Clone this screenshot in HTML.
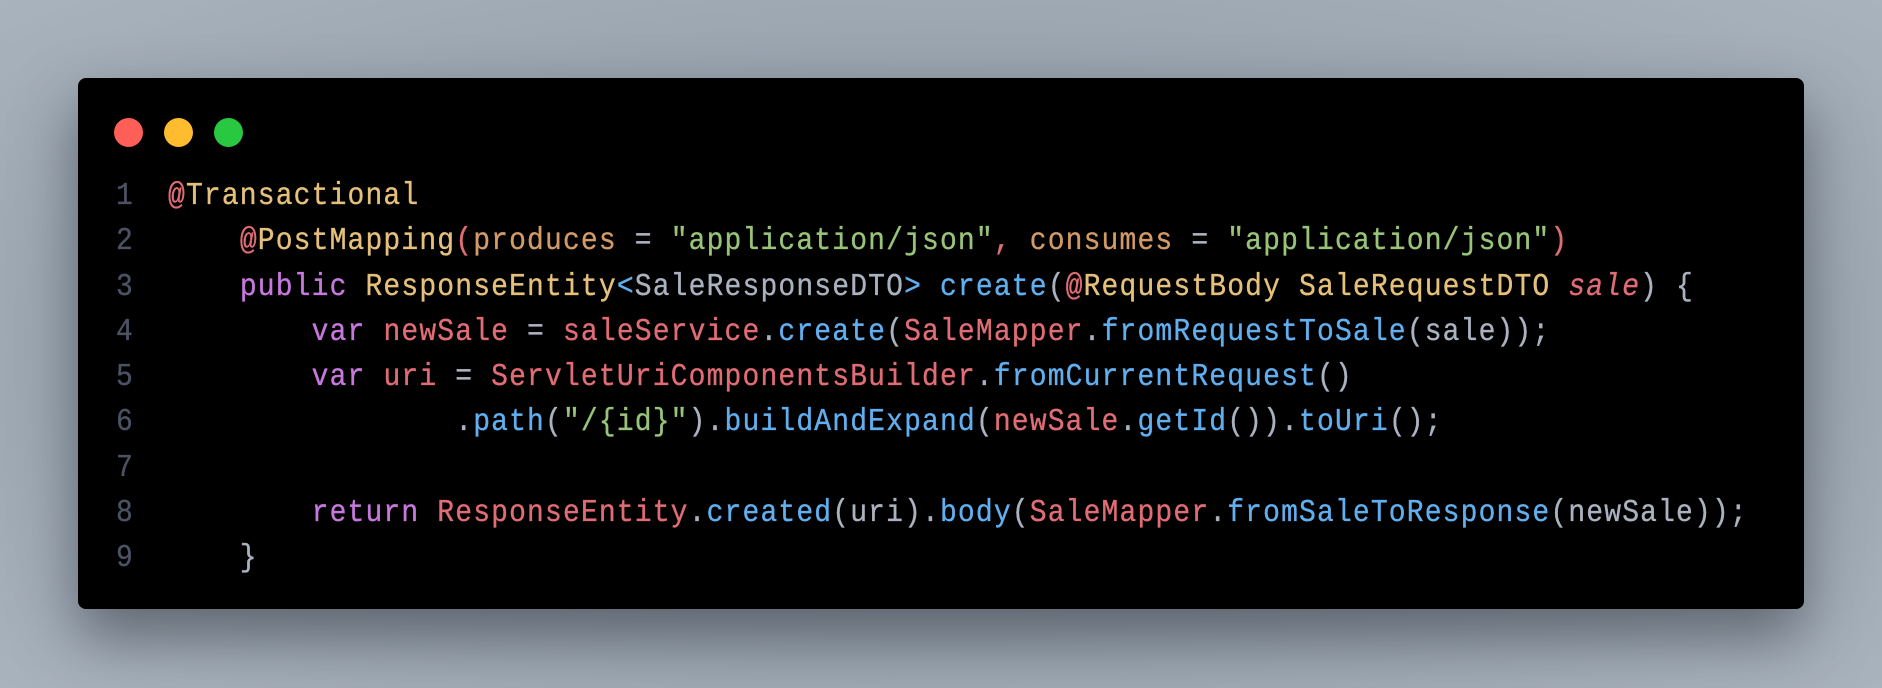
<!DOCTYPE html>
<html><head><meta charset="utf-8"><style>
html,body{margin:0;padding:0;width:1882px;height:688px;overflow:hidden;}
body{background:radial-gradient(ellipse at 50% 50%,#8a939c 0%,#9aa5b0 60%,#a9b3bd 100%);position:relative;}
.win{position:absolute;left:78px;top:78px;width:1726px;height:531px;background:#000;border-radius:8px;box-shadow:0 28px 60px rgba(40,46,54,0.55);}
.dot{position:absolute;top:118px;width:29px;height:29px;border-radius:50%;}
.code{position:absolute;left:0;top:174px;width:1882px;font-family:"Liberation Mono",monospace;font-size:28px;letter-spacing:1.15px;line-height:45.3px;color:#abb2bf;-webkit-text-stroke:0.3px currentColor;}
.row{position:relative;height:45.3px;}
.ln{position:absolute;left:116px;width:20px;color:#4b5263;transform:scaleY(1.12);}
.l{position:absolute;left:168px;white-space:pre;transform:scaleY(1.12);}
.r{color:#e06c75}.y{color:#e5c07b}.o{color:#d19a66}.g{color:#98c379}.p{color:#c678dd}.b{color:#61afef}.i{font-style:italic;color:#e06c75}
</style></head><body>
<div class="win"></div>
<div class="dot" style="left:114px;background:#ff5f57"></div>
<div class="dot" style="left:164px;background:#febc2e"></div>
<div class="dot" style="left:214px;background:#28c840"></div>
<div class="code"><div class="row"><span class="ln">1</span><span class="l"><span class="r">@</span><span class="y">Transactional</span></span></div><div class="row"><span class="ln">2</span><span class="l">    <span class="r">@</span><span class="y">PostMapping</span><span class="r">(</span><span class="o">produces</span> = <span class="g">"application/json"</span><span class="r">,</span> <span class="o">consumes</span> = <span class="g">"application/json"</span><span class="r">)</span></span></div><div class="row"><span class="ln">3</span><span class="l">    <span class="p">public</span> <span class="y">ResponseEntity</span><span class="b">&lt;</span>SaleResponseDTO<span class="b">&gt;</span> <span class="b">create</span>(<span class="r">@</span><span class="y">RequestBody</span> <span class="y">SaleRequestDTO</span> <span class="i">sale</span>) {</span></div><div class="row"><span class="ln">4</span><span class="l">        <span class="p">var</span> <span class="r">newSale</span> = <span class="r">saleService</span>.<span class="b">create</span>(<span class="r">SaleMapper</span>.<span class="b">fromRequestToSale</span>(sale));</span></div><div class="row"><span class="ln">5</span><span class="l">        <span class="p">var</span> <span class="r">uri</span> = <span class="r">ServletUriComponentsBuilder</span>.<span class="b">fromCurrentRequest</span>()</span></div><div class="row"><span class="ln">6</span><span class="l">                .<span class="b">path</span>(<span class="g">"/{id}"</span>).<span class="b">buildAndExpand</span>(<span class="r">newSale</span>.<span class="b">getId</span>()).<span class="b">toUri</span>();</span></div><div class="row"><span class="ln">7</span><span class="l"></span></div><div class="row"><span class="ln">8</span><span class="l">        <span class="p">return</span> <span class="r">ResponseEntity</span>.<span class="b">created</span>(uri).<span class="b">body</span>(<span class="r">SaleMapper</span>.<span class="b">fromSaleToResponse</span>(newSale));</span></div><div class="row"><span class="ln">9</span><span class="l">    }</span></div></div>
</body></html>
